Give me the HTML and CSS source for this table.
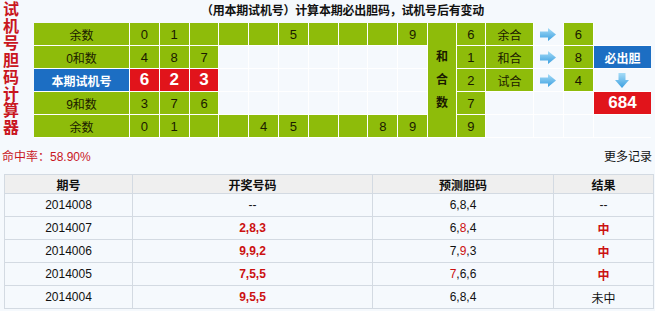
FILE: index.html
```html
<!DOCTYPE html>
<html lang="zh">
<head>
<meta charset="utf-8">
<link rel="stylesheet" href="styles.css">
</head>
<body>
<div class="top">
  <div class="side">试机号胆码计算器</div>
  <div class="main">
    <div class="title">（用本期试机号）计算本期必出胆码，试机号后有变动</div>
    <div class="grid">
      <!-- row 1 -->
      <div class="c g lbl">余数</div>
      <div class="c g">0</div><div class="c g">1</div><div class="c g"></div><div class="c g"></div><div class="c g"></div><div class="c g">5</div><div class="c g"></div><div class="c g"></div><div class="c g"></div><div class="c g">9</div>
      <div class="c g hhs"><span>和</span><span>合</span><span>数</span></div>
      <div class="c g">6</div><div class="c g lbl">余合</div><div class="c"><svg class="ar" viewBox="0 0 16 13"><defs><linearGradient id="ga" x1="0" y1="0" x2="0" y2="1"><stop offset="0" stop-color="#a6dcf7"/><stop offset="1" stop-color="#3a9fe0"/></linearGradient></defs><path d="M0 3.5H8V0L16 6.5L8 13V9.5H0Z" fill="url(#ga)"/></svg></div><div class="c g">6</div><div class="c"></div>
      <!-- row 2 -->
      <div class="c g lbl">0和数</div>
      <div class="c g">4</div><div class="c g">8</div><div class="c g">7</div><div class="c"></div><div class="c"></div><div class="c"></div><div class="c"></div><div class="c"></div><div class="c"></div><div class="c"></div>
      <div class="c g">1</div><div class="c g lbl">和合</div><div class="c"><svg class="ar" viewBox="0 0 16 13"><path d="M0 3.5H8V0L16 6.5L8 13V9.5H0Z" fill="url(#ga)"/></svg></div><div class="c g">8</div><div class="c blue">必出胆</div>
      <!-- row 3 -->
      <div class="c blue">本期试机号</div>
      <div class="c red">6</div><div class="c red">2</div><div class="c red">3</div><div class="c"></div><div class="c"></div><div class="c"></div><div class="c"></div><div class="c"></div><div class="c"></div><div class="c"></div>
      <div class="c g">2</div><div class="c g lbl">试合</div><div class="c"><svg class="ar" viewBox="0 0 16 13"><path d="M0 3.5H8V0L16 6.5L8 13V9.5H0Z" fill="url(#ga)"/></svg></div><div class="c g">4</div><div class="c"><svg class="ard" viewBox="0 0 14 15"><defs><linearGradient id="gd" x1="0" y1="0" x2="0" y2="1"><stop offset="0" stop-color="#a6dcf7"/><stop offset="1" stop-color="#3a9fe0"/></linearGradient></defs><path d="M3.5 0H10.5V7H14L7 15L0 7H3.5Z" fill="url(#gd)"/></svg></div>
      <!-- row 4 -->
      <div class="c g lbl">9和数</div>
      <div class="c g">3</div><div class="c g">7</div><div class="c g">6</div><div class="c"></div><div class="c"></div><div class="c"></div><div class="c"></div><div class="c"></div><div class="c"></div><div class="c"></div>
      <div class="c g">7</div><div class="c"></div><div class="c"></div><div class="c"></div><div class="c red big">684</div>
      <!-- row 5 -->
      <div class="c g lbl">余数</div>
      <div class="c g">0</div><div class="c g">1</div><div class="c g"></div><div class="c g"></div><div class="c g">4</div><div class="c g">5</div><div class="c g"></div><div class="c g"></div><div class="c g">8</div><div class="c g">9</div>
      <div class="c g">9</div><div class="c"></div><div class="c"></div><div class="c"></div><div class="c"></div>
    </div>
  </div>
</div>
<div class="info">
  <span class="rate">命中率：58.90%</span>
  <span class="more">更多记录</span>
</div>
<table class="hist">
  <colgroup><col class="w1"><col class="w2"><col class="w3"><col class="w4"></colgroup>
  <thead>
    <tr><th>期号</th><th>开奖号码</th><th>预测胆码</th><th>结果</th></tr>
  </thead>
  <tbody>
    <tr><td>2014008</td><td>--</td><td>6,8,4</td><td>--</td></tr>
    <tr><td>2014007</td><td class="hit">2,8,3</td><td>6,<em>8</em>,4</td><td class="hit">中</td></tr>
    <tr><td>2014006</td><td class="hit">9,9,2</td><td>7,<em>9</em>,3</td><td class="hit">中</td></tr>
    <tr><td>2014005</td><td class="hit">7,5,5</td><td><em>7</em>,6,6</td><td class="hit">中</td></tr>
    <tr><td>2014004</td><td class="hit">9,5,5</td><td>6,8,4</td><td>未中</td></tr>
  </tbody>
</table>
</body>
</html>
```

FILE: styles.css
```css
html, body {
  margin: 0;
  padding: 0;
  background: #f5f9fd;
  font-family: "Liberation Sans", "Noto Sans CJK SC", sans-serif;
  font-size: 12px;
  color: #111;
}

.top {
  display: flex;
  height: 138px;
}

.side {
  width: 17px;
  padding: 2px 0 0 3px;
  margin-right: 14px;
  font-size: 16px;
  line-height: 16.9px;
  font-weight: bold;
  color: #c9161e;
  word-break: break-all;
}

.main {
  display: flex;
  flex-direction: column;
  width: 617px;
}

.title {
  height: 23px;
  line-height: 23px;
  text-align: center;
  font-weight: bold;
  font-size: 12px;
  letter-spacing: -0.2px;
}

.grid {
  display: grid;
  grid-template-columns: 95px repeat(10, 28.8px) 28px 28px 47px 29px 29px 57px;
  grid-auto-rows: 22px;
  gap: 1px;
  background: #ffffff;
  padding-bottom: 1px;
}

.c {
  background: #f5f9fd;
  display: flex;
  align-items: center;
  justify-content: center;
  font-size: 13px;
}

.g {
  background: #8ebc0a;
  color: #1a1a00;
}

.lbl {
  font-size: 12px;
}

.blue {
  background: #1c6ec3;
  color: #fff;
  font-weight: bold;
  font-size: 12px;
}

.red {
  background: #e1141b;
  color: #fff;
  font-weight: bold;
  font-size: 17px;
}

.big {
  font-size: 17px;
}

.hhs {
  grid-column: 12;
  grid-row: 1 / span 5;
  flex-direction: column;
  justify-content: center;
  font-weight: bold;
  font-size: 12px;
}

.hhs span {
  line-height: 23px;
}

.ar {
  width: 16px;
  height: 13px;
}

.ard {
  width: 14px;
  height: 15px;
}

.info {
  display: flex;
  justify-content: space-between;
  margin-top: 10px;
  height: 18px;
  line-height: 18px;
  padding: 0 3px 0 2px;
}

.rate {
  color: #c9161e;
}

.more {
  color: #111;
}

.hist {
  margin: 8px 0 0 4px;
  width: 649px;
  border-collapse: collapse;
  table-layout: fixed;
}

.w1 { width: 128px; }
.w2 { width: 240px; }
.w3 { width: 181px; }
.w4 { width: 100px; }

.hist th, .hist td {
  border: 1px solid #d3dae2;
  text-align: center;
  padding: 0;
  font-size: 12px;
}

.hist th {
  background: #efefef;
  height: 18px;
  font-weight: bold;
}

.hist td {
  height: 22px;
}

.hist .hit {
  color: #cc1111;
  font-weight: bold;
}

.hist em {
  font-style: normal;
  color: #cc1111;
}
```
